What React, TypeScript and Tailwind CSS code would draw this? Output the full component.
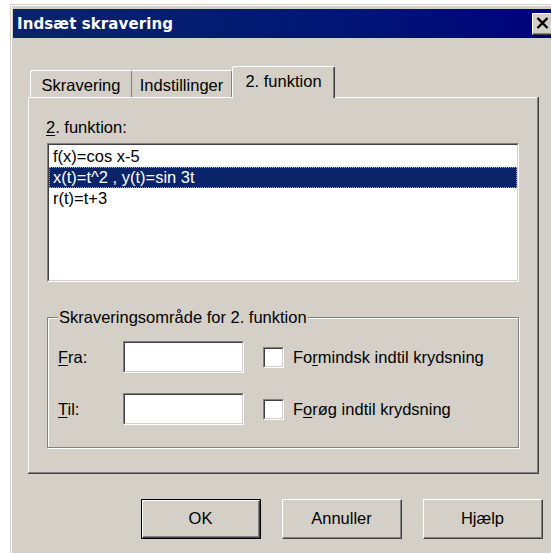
import React from "react";

const body = "font-['Liberation_Sans',Arial,sans-serif] text-[16.5px] leading-[19px] text-black";

function Sunken({ className, children }: { className?: string; children?: React.ReactNode }) {
  return (
    <div
      className={
        "border-t border-l border-b border-r border-t-[#808080] border-l-[#808080] border-b-white border-r-white " +
        (className ?? "")
      }
    >
      <div className="w-full h-full border-t border-l border-b border-r border-t-[#404040] border-l-[#404040] border-b-[#d4d0c8] border-r-[#d4d0c8] bg-white">
        {children}
      </div>
    </div>
  );
}

function Button({ label, isDefault }: { label: React.ReactNode; isDefault?: boolean }) {
  const face = (
    <div className="w-full h-full border-t border-l border-b border-r border-t-white border-l-white border-b-[#404040] border-r-[#404040]">
      <div className="w-full h-full flex items-center justify-center border-b border-r border-b-[#808080] border-r-[#808080]">
        {label}
      </div>
    </div>
  );
  return (
    <div className={"w-[120px] h-[40px] " + (isDefault ? "border border-black" : "")}>{face}</div>
  );
}

function Check() {
  return <Sunken className="w-[21px] h-[21px]" />;
}

export default function App() {
  return (
    <div className={"w-[551px] h-[553px] overflow-hidden bg-white pl-[10px] pt-[4px] " + body}>
      <div className="w-[551px] h-[560px] bg-[#d4d0c8] border-t border-l border-[#d4d0c8]">
        <div className="w-full h-full border-t border-l border-white pt-[3px] pl-[1px]">
          {/* caption bar */}
          <div className="h-[29px] w-[543px] flex items-center justify-between bg-gradient-to-r from-[#0a246a] to-[#00007c]">
            <span className="pl-[4px] pt-[2px] font-['DejaVu_Sans',Verdana,sans-serif] font-bold text-[15px] text-white tracking-[0.1px]">
              Indsæt skravering
            </span>
            <div className="mr-[2px] w-[22px] h-[22px] bg-[#d4d0c8] border-t border-l border-b border-r border-t-white border-l-white border-b-[#404040] border-r-[#404040]">
              <div className="w-full h-full flex items-center justify-center border-b border-r border-b-[#808080] border-r-[#808080]">
                <svg width="13" height="12" viewBox="0 0 13 12">
                  <path d="M1.5 1 L11.5 11 M11.5 1 L1.5 11" stroke="#000" strokeWidth="2.4" />
                </svg>
              </div>
            </div>
          </div>

          {/* tab strip */}
          <div className="pt-[28px] ml-[17px] h-[59px] flex items-end">
            <div className="w-[102px] h-[27px] flex items-center justify-center pt-[3px] border-t border-l border-r border-t-white border-l-white border-r-[#808080] rounded-tl-[3px] rounded-tr-[2px]">
              Skravering
            </div>
            <div className="w-[100px] h-[27px] flex items-center justify-center pt-[3px] border-t border-r border-t-white border-r-[#808080] rounded-tr-[2px]">
              Indstillinger
            </div>
            <div className="relative z-10 -mb-px w-[103px] h-[32px] bg-[#d4d0c8] flex items-center justify-center pb-[3px] border-t border-l border-r border-t-white border-l-white border-r-[#404040] rounded-tl-[3px] rounded-tr-[2px] shadow-[inset_-1px_0_0_#808080]">
              2. funktion
            </div>
          </div>

          {/* tab page */}
          <div className="ml-[15px] w-[511px] h-[377px] border-b border-r border-b-[#404040] border-r-[#404040]">
            <div className="w-full h-full border-t border-l border-b border-r border-t-white border-l-white border-b-[#808080] border-r-[#808080] pt-[20px] pl-[17px]">
              <div className="ml-[0px]">
                <span className="underline underline-offset-2">2</span>. funktion:
              </div>
              <Sunken className="mt-[6px] ml-[1px] w-[472px] h-[139px]">
                <div className="pt-[1px] leading-[21px]">
                  <div className="h-[21px] pl-[4px]">f(x)=cos x-5</div>
                  <div className="h-[21px] pl-[3px] bg-[#0a246a] text-white border border-dotted border-[#9aa6cc] leading-[19px]">
                    x(t)=t^2 , y(t)=sin 3t
                  </div>
                  <div className="h-[21px] pl-[4px]">r(t)=t+3</div>
                </div>
              </Sunken>

              <fieldset className="mt-[26px] ml-[1px] w-[472px] h-[140px] border border-[#808080] shadow-[inset_1px_1px_0_#fff,1px_1px_0_#fff] px-[10px] pt-[14px]">
                <legend className="ml-[0px] px-[1px] bg-[#d4d0c8] relative">Skraveringsområde for 2. funktion</legend>
                <div className="flex items-center h-[32px]">
                  <span className="w-[65px]">
                    <span className="underline underline-offset-2">F</span>ra:
                  </span>
                  <Sunken className="w-[121px] h-[32px]" />
                  <div className="ml-[19px]">
                    <Check />
                  </div>
                  <span className="ml-[9px]">
                    Fo<span className="underline underline-offset-2">r</span>mindsk indtil krydsning
                  </span>
                </div>
                <div className="flex items-center h-[32px] mt-[20px]">
                  <span className="w-[65px]">
                    <span className="underline underline-offset-2">T</span>il:
                  </span>
                  <Sunken className="w-[121px] h-[32px]" />
                  <div className="ml-[19px]">
                    <Check />
                  </div>
                  <span className="ml-[9px]">
                    F<span className="underline underline-offset-2">o</span>røg indtil krydsning
                  </span>
                </div>
              </fieldset>
            </div>
          </div>

          {/* dialog buttons */}
          <div className="mt-[25px] ml-[128px] flex gap-[21px]">
            <Button label="OK" isDefault />
            <Button label="Annuller" />
            <Button label="Hjælp" />
          </div>
        </div>
      </div>
    </div>
  );
}
